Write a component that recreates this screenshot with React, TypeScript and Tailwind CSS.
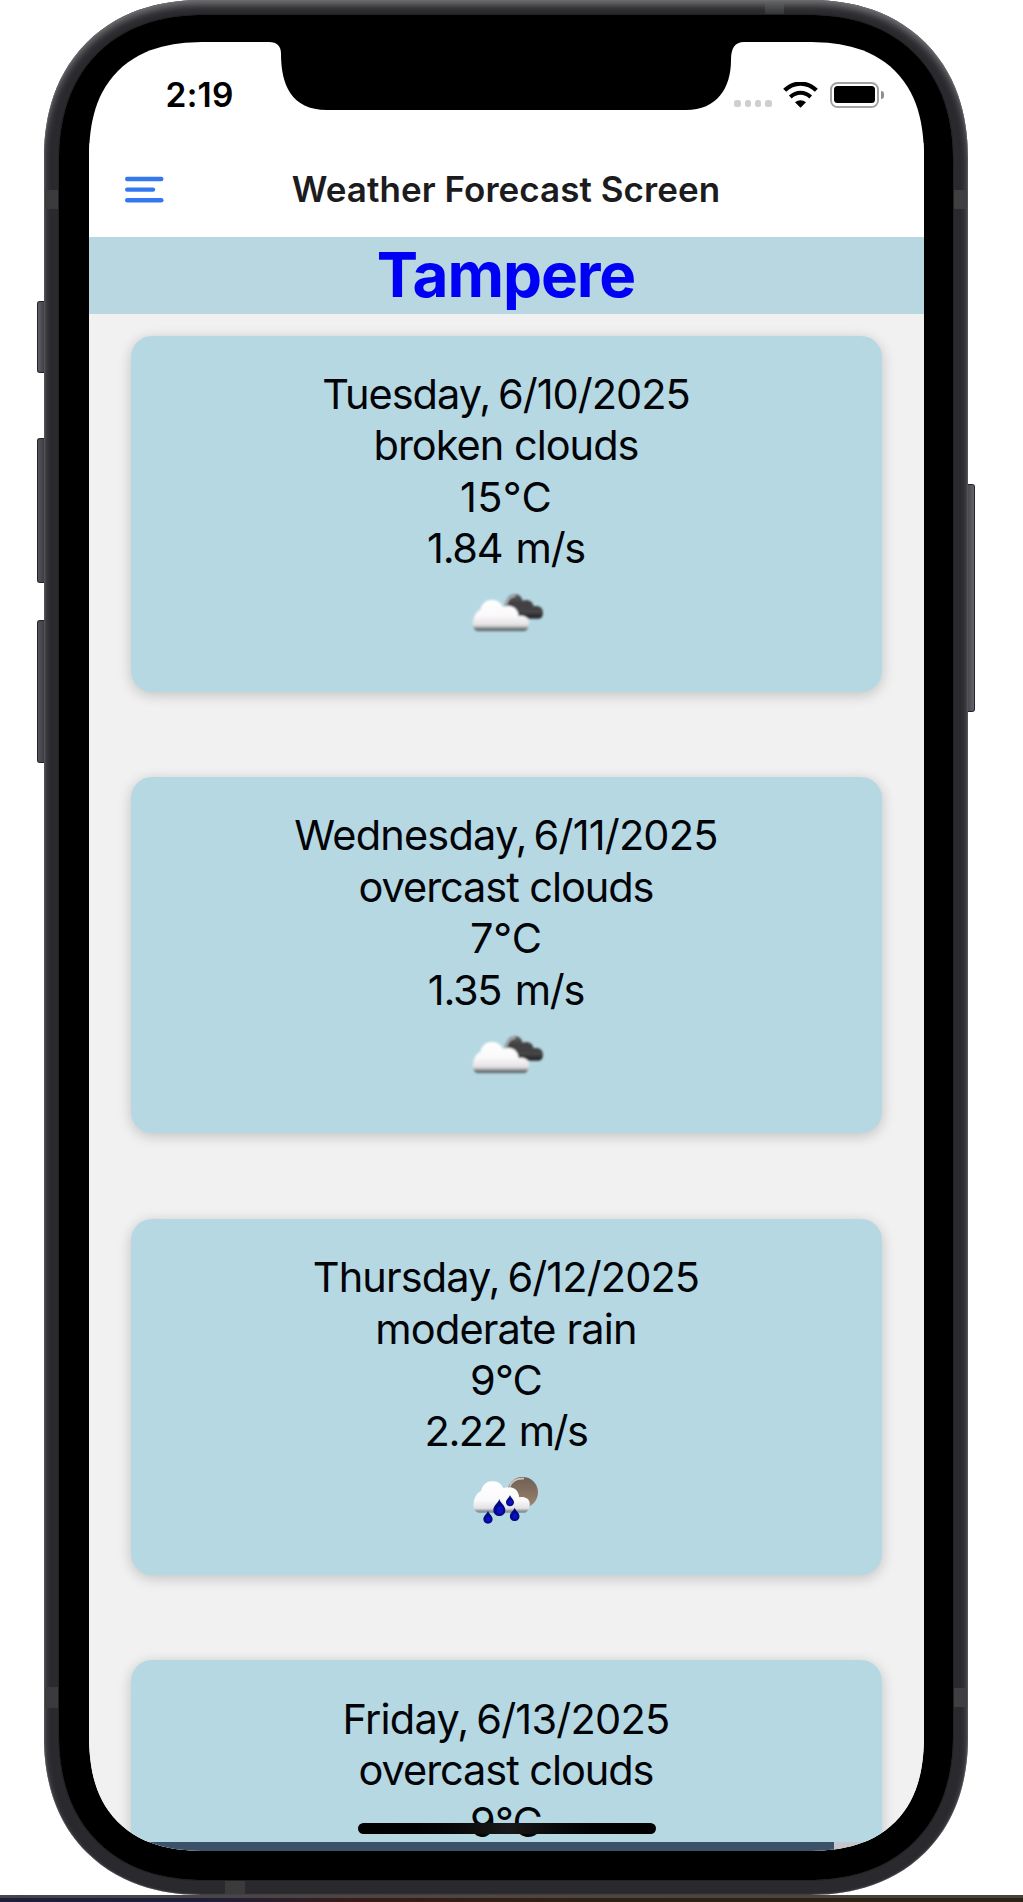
import type { ReactNode } from "react";

type Line = { text: string; spacing: string };
type Forecast = { lines: Line[]; icon: "clouds" | "rain" };

const forecasts: Forecast[] = [
  {
    lines: [
      { text: "Tuesday, 6/10/2025", spacing: "tracking-[-0.98px] [word-spacing:-3px]" },
      { text: "broken clouds", spacing: "tracking-[-1px]" },
      { text: "15°C", spacing: "tracking-[0.3px]" },
      { text: "1.84 m/s", spacing: "tracking-[-1.3px] [word-spacing:3px]" },
    ],
    icon: "clouds",
  },
  {
    lines: [
      { text: "Wednesday, 6/11/2025", spacing: "tracking-[-0.82px] [word-spacing:-4px]" },
      { text: "overcast clouds", spacing: "tracking-[-1.06px]" },
      { text: "7°C", spacing: "tracking-[0px]" },
      { text: "1.35 m/s", spacing: "tracking-[-1.25px] [word-spacing:3px]" },
    ],
    icon: "clouds",
  },
  {
    lines: [
      { text: "Thursday, 6/12/2025", spacing: "tracking-[-0.9px] [word-spacing:-3px]" },
      { text: "moderate rain", spacing: "tracking-[-0.85px]" },
      { text: "9°C", spacing: "tracking-[-0.9px]" },
      { text: "2.22 m/s", spacing: "tracking-[-1.5px] [word-spacing:2px]" },
    ],
    icon: "rain",
  },
  {
    lines: [
      { text: "Friday, 6/13/2025", spacing: "tracking-[-0.78px] [word-spacing:-3px]" },
      { text: "overcast clouds", spacing: "tracking-[-1.06px]" },
      { text: "9°C", spacing: "tracking-[-0.9px]" },
    ],
    icon: "clouds",
  },
];

const cloudPath =
  "M118 184 C106 182 100 168 103 155 C105 142 111 125 125 119 C130 98 145 89 160 90 C176 89 187 98 192 111 C208 104 229 108 236 124 C239 131 239 135 240 138 C254 134 269 141 271 154 C272 168 268 180 258 184 Z";

function Drop({ x, y, s }: { x: number; y: number; s: number }) {
  return (
    <g transform={`translate(${x} ${y}) scale(${s})`}>
      <path d="M0 -14 C2 -6 12 -1 12 8 C12 16 6 20 0 20 C-6 20 -12 16 -12 8 C-12 -1 -2 -6 0 -14Z" fill="#060a82" />
      <ellipse cx="1" cy="8" rx="6" ry="7" fill="#0b10cf" />
    </g>
  );
}

function CloudsIcon() {
  return (
    <svg className="block h-[80px] w-[130px] shrink-0" viewBox="7 12 390 240">
      <defs>
        <linearGradient id="cloudWhite" x1="0" y1="0" x2="0" y2="1">
          <stop offset="0" stopColor="#ffffff" />
          <stop offset="0.5" stopColor="#fbf9fa" />
          <stop offset="0.8" stopColor="#e2e0e2" />
          <stop offset="0.87" stopColor="#a9aaac" />
          <stop offset="0.94" stopColor="#5f686b" />
          <stop offset="1" stopColor="#6d7d82" />
        </linearGradient>
        <linearGradient id="cloudDark" x1="0" y1="0" x2="0" y2="1">
          <stop offset="0" stopColor="#5e5f61" />
          <stop offset="0.35" stopColor="#414042" />
          <stop offset="0.75" stopColor="#454546" />
          <stop offset="0.9" stopColor="#222426" />
          <stop offset="1" stopColor="#4b5559" />
        </linearGradient>
        <filter id="soft" x="-10%" y="-10%" width="120%" height="120%">
          <feGaussianBlur stdDeviation="2.4" />
        </filter>
      </defs>
      <g filter="url(#soft)">
        <path
          d="M198 110 C200 88 212 73 228 73 C241 72 249 80 252 92 C266 86 282 92 285 109 C301 105 313 113 313 128 C313 140 306 147 296 147 H215 Z"
          fill="url(#cloudDark)"
        />
        <path d="M203 108 C204 90 214 79 230 77" fill="none" stroke="#b9bcbe" strokeWidth="5" />
        <path d={cloudPath} fill="url(#cloudWhite)" />
      </g>
    </svg>
  );
}

function RainIcon() {
  return (
    <svg className="block h-[80px] w-[130px] shrink-0" viewBox="7 22 390 240">
      <defs>
        <linearGradient id="rainCloud" x1="0" y1="0" x2="0" y2="1">
          <stop offset="0" stopColor="#ffffff" />
          <stop offset="0.6" stopColor="#fafafc" />
          <stop offset="0.86" stopColor="#e2e2e6" />
          <stop offset="0.95" stopColor="#90959b" />
          <stop offset="1" stopColor="#7d8f98" />
        </linearGradient>
        <linearGradient id="moon" x1="0" y1="0" x2="0" y2="1">
          <stop offset="0" stopColor="#6e6057" />
          <stop offset="0.5" stopColor="#85715f" />
          <stop offset="1" stopColor="#9c8670" />
        </linearGradient>
        <filter id="softRain" x="-10%" y="-10%" width="120%" height="120%">
          <feGaussianBlur stdDeviation="2" />
        </filter>
      </defs>
      <g filter="url(#softRain)">
        <circle cx="252" cy="125" r="46" fill="url(#moon)" />
        <path d="M213 108 C220 90 235 82 256 84" fill="none" stroke="#cfc6bd" strokeWidth="5" />
        <path d={cloudPath} fill="url(#rainCloud)" transform="translate(2 2)" />
        <Drop x={182} y={166} s={1.5} />
        <Drop x={214} y={147} s={1} />
        <Drop x={228} y={187} s={1.2} />
        <Drop x={148} y={196} s={1.15} />
      </g>
    </svg>
  );
}

function ForecastCard({ forecast }: { forecast: Forecast }) {
  return (
    <article className="flex h-[356px] shrink-0 flex-col items-center rounded-[21px] bg-[#b6d8e3] pt-[33.3px] shadow-[0_3px_14px_rgba(0,0,0,0.2)]">
      {forecast.lines.map((line) => (
        <p
          key={line.text}
          className={`h-[51.4px] text-[41.5px] leading-[51.4px] whitespace-nowrap text-[#020408] ${line.spacing}`}
        >
          {line.text}
        </p>
      ))}
      {forecast.icon === "rain" ? <RainIcon /> : <CloudsIcon />}
    </article>
  );
}

function StatusBar() {
  return (
    <div className="flex h-[101px] shrink-0 items-center justify-between pt-[4px] pr-[40px] pl-[77px]">
      <span className="mt-[3px] text-[33.5px] leading-none font-semibold tracking-[0.26px] text-black">2:19</span>
      <div className="flex items-center">
        <div className="mt-[18px] flex gap-[3.6px]">
          {[0, 1, 2, 3].map((n) => (
            <span key={n} className="size-[6.6px] rounded-[2.5px] bg-[#cfcfcf]" />
          ))}
        </div>
        <svg className="ml-[11px] h-[26px] w-[35px]" viewBox="0 0 105 78">
          <path d="M5 25 C32 -2 73 -2 100 25" fill="none" stroke="#000" strokeWidth="12.5" />
          <path d="M22 45 C40 28 65 28 83 45" fill="none" stroke="#000" strokeWidth="12" />
          <path d="M36 61 C46 53 59 53 69 61 L54 76 Q52.5 78 51 76 Z" fill="#000" />
        </svg>
        <div className="ml-[12px] flex h-[26px] w-[49px] items-center rounded-[7.5px] border-2 border-[#a3a3a3] p-[2px]">
          <div className="h-[17.5px] w-full rounded-[3.5px] bg-black" />
        </div>
        <span className="ml-[2px] h-[8px] w-[3px] rounded-r-full bg-[#8f8f8f]" />
      </div>
    </div>
  );
}

function NavBar() {
  return (
    <header className="flex h-[94px] shrink-0 items-center bg-white pb-[2px]">
      <svg className="ml-[36px] h-[27px] w-[39px] shrink-0" viewBox="0 0 39 27">
        <g stroke="#3478f0" strokeWidth="4.4" strokeLinecap="round">
          <path d="M2.2 3 H36.3" />
          <path d="M2.2 13.6 H28" />
          <path d="M2.2 24.3 H36.3" />
        </g>
      </svg>
      <h1 className="mr-[75px] flex-1 text-center text-[35px] leading-none font-semibold tracking-[0.05px] whitespace-nowrap text-[#1c1c1e]">
        Weather Forecast Screen
      </h1>
    </header>
  );
}

function Notch() {
  return (
    <svg className="absolute top-[-1px] left-[180px] h-[70px] w-[475px]" viewBox="0 -1 475 70">
      <path
        d="M0 -1 V0 C8 0 12 4 12 12 C12 42 22 68 58 68 H417 C448 68 462 46 462 18 C462 6 466 0 475 0 V-1 Z"
        fill="#000"
      />
    </svg>
  );
}

function PhoneFrame({ children }: { children: ReactNode }) {
  return (
    <div className="relative ml-[44px] h-[1895px] w-[924px] shrink-0">
      <span className="absolute top-[301px] left-[-7px] h-[72px] w-[8px] rounded-l-[3px] border-y border-l border-[#242329] bg-linear-to-r from-[#62616a] to-[#3a393f]" />
      <span className="absolute top-[438px] left-[-7px] h-[145px] w-[8px] rounded-l-[3px] border-y border-l border-[#242329] bg-linear-to-r from-[#56555c] to-[#3a393f]" />
      <span className="absolute top-[620px] left-[-7px] h-[143px] w-[8px] rounded-l-[3px] border-y border-l border-[#242329] bg-linear-to-r from-[#56555c] to-[#3a393f]" />
      <span className="absolute top-[484px] right-[-7px] h-[228px] w-[8px] rounded-r-[3px] border-y border-r border-[#242329] bg-linear-to-l from-[#66656b] to-[#444348]" />
      <div className="relative flex size-full overflow-hidden rounded-[158px] bg-[#2a292e] p-[15px] shadow-[inset_0_0_2px_#77777c,inset_0_5px_7px_#6e7071] [corner-shape:superellipse(1.14)]">
        <span className="absolute top-[190px] left-[1px] h-[19px] w-[13px] bg-[#3b3b3d]" />
        <span className="absolute top-[1687px] left-[1px] h-[21px] w-[13px] bg-[#3b3b3d]" />
        <span className="absolute top-[190px] right-[1px] h-[19px] w-[13px] bg-[#3f3f41]" />
        <span className="absolute top-[1688px] right-[1px] h-[19px] w-[13px] bg-[#3f3f41]" />
        <span className="absolute top-[1px] left-[721px] h-[13px] w-[19px] bg-linear-to-b from-[#636566] to-[#343436]" />
        <span className="absolute bottom-[1px] left-[181px] h-[13px] w-[20px] bg-[#3b3b3c]" />
        <div className="relative flex size-full rounded-[146px] bg-black px-[29.5px] pt-[27px] pb-[29px] outline-1 outline-[#222220] [corner-shape:superellipse(1.18)]">
          {children}
        </div>
      </div>
    </div>
  );
}

export default function App() {
  return (
    <main className="flex h-[1902px] w-[1023px] flex-col overflow-hidden bg-white font-['Inter','Liberation_Sans',sans-serif]">
      <PhoneFrame>
        <div className="relative flex size-full flex-col overflow-hidden rounded-[118px] bg-white [corner-shape:superellipse(1.3)]">
          <StatusBar />
          <NavBar />
          <h2 className="flex h-[77px] shrink-0 items-center justify-center bg-[#b9d7e1] pb-px text-[62px] leading-none font-bold tracking-[-1.11px] text-[#0000f5]">
            Tampere
          </h2>
          <div className="flex min-h-0 flex-1 flex-col gap-[85.67px] overflow-hidden bg-[#f1f1f1] px-[42px] pt-[21.5px]">
            {forecasts.map((forecast) => (
              <ForecastCard key={forecast.lines[0].text} forecast={forecast} />
            ))}
          </div>
          <div className="flex h-[9px] shrink-0 bg-[#c5c6cb]">
            <div className="w-[745px] bg-[#3c5268]" />
          </div>
          <Notch />
          <span className="absolute bottom-[17px] left-[269px] h-[11px] w-[298px] rounded-full bg-linear-to-r from-black via-[#191919] to-black" />
        </div>
      </PhoneFrame>
      <div className="h-[3px] shrink-0 bg-linear-to-r from-[#45444f] via-[#4f473f] to-[#45443a]" />
      <div className="h-[4px] shrink-0 bg-linear-to-r from-[#1f1e3a] from-20% via-[#3a1a16] via-35% to-[#2d2114] to-60%" />
    </main>
  );
}
